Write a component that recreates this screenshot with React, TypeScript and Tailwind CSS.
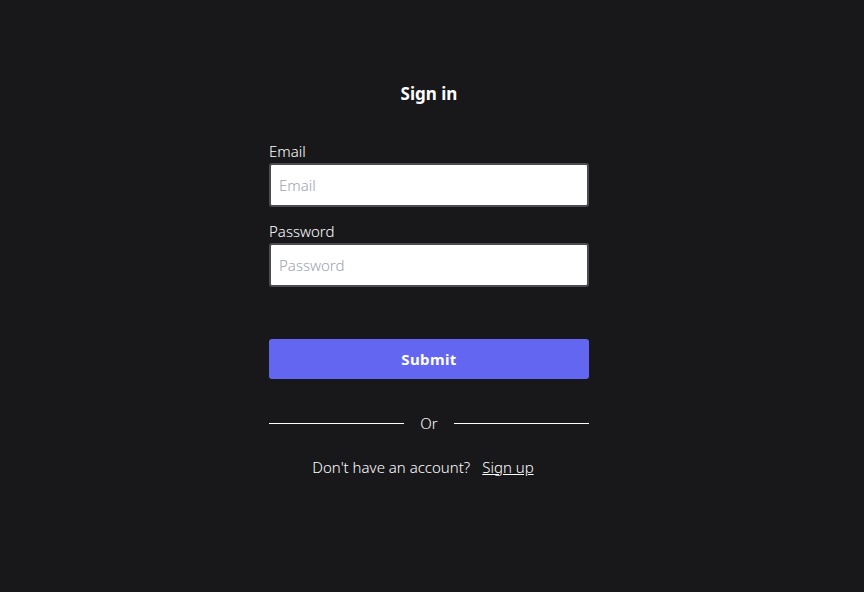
export default function App() {
  return (
    <div
      className="min-h-[592px] w-full bg-[#18181b] pr-[6px] text-white"
      style={{ fontFamily: '"Noto Sans", "Open Sans", sans-serif' }}
    >
      <div className="mx-auto flex w-[320px] flex-col pt-[81px]">
        <h1 className="text-center text-[17px] font-bold leading-[26px]">Sign in</h1>

        <form className="mt-[33px] flex flex-col" onSubmit={(e) => e.preventDefault()}>
          <label className="text-[15px] font-light leading-[22px]">Email</label>
          <input
            type="email"
            placeholder="Email"
            className="mt-[1px] h-[44px] w-full rounded-[3px] border-2 border-[#4b4b52] bg-white px-2 text-[15px] font-light text-black placeholder:text-[#9ca3af]"
          />
          <label className="mt-[13px] text-[15px] font-light leading-[22px]">Password</label>
          <input
            type="password"
            placeholder="Password"
            className="mt-[1px] h-[44px] w-full rounded-[3px] border-2 border-[#4b4b52] bg-white px-2 text-[15px] font-light text-black placeholder:text-[#9ca3af]"
          />
          <button
            type="submit"
            className="mt-[52px] h-[40px] w-full rounded-[3px] bg-[#6366f1] text-[15px] font-bold tracking-wide"
          >
            Submit
          </button>
        </form>

        <div className="mt-[33px] flex items-center gap-[16px]">
          <div className="h-px flex-1 bg-white" />
          <span className="w-[18px] text-center text-[15px] font-light leading-[22px]">Or</span>
          <div className="h-px flex-1 bg-white" />
        </div>

        <p className="mt-[22px] text-center text-[15px] font-light leading-[22px]">
          Don't have an account?
          <a href="#" className="mx-[12px] underline">
            Sign up
          </a>
        </p>
      </div>
    </div>
  );
}
